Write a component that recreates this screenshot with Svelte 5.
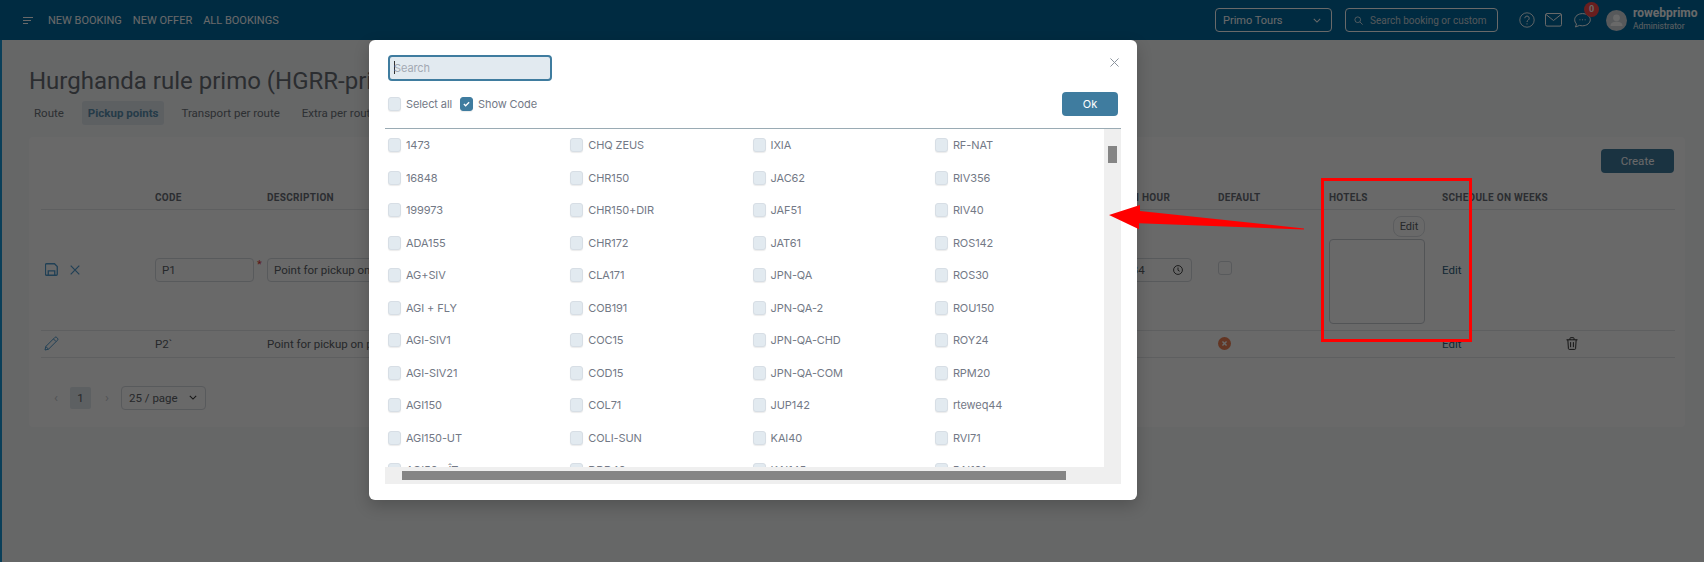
<script>
  const codes = [
    ["1473", "CHQ ZEUS", "IXIA", "RF-NAT"],
    ["16848", "CHR150", "JAC62", "RIV356"],
    ["199973", "CHR150+DIR", "JAF51", "RIV40"],
    ["ADA155", "CHR172", "JAT61", "ROS142"],
    ["AG+SIV", "CLA171", "JPN-QA", "ROS30"],
    ["AGI + FLY", "COB191", "JPN-QA-2", "ROU150"],
    ["AGI-SIV1", "COC15", "JPN-QA-CHD", "ROY24"],
    ["AGI-SIV21", "COD15", "JPN-QA-COM", "RPM20"],
    ["AGI150", "COL71", "JUP142", "rteweq44"],
    ["AGI150-UT", "COLI-SUN", "KAI40", "RVI71"],
    ["AGI50 - ÎT", "DDD40", "KAI145", "RAI101"]
  ];
</script>

<div class="page">
  <div class="side"></div>
  <header class="top">
    <svg class="burger" viewBox="0 0 10 7" width="10" height="7"><path d="M0 .5h10M0 3.5h8M0 6.5h5" stroke="#fff" fill="none"/></svg>
    <nav class="links">
      <span>NEW BOOKING</span>
      <span>NEW OFFER</span>
      <span>ALL BOOKINGS</span>
    </nav>
    <div class="grow"></div>
    <div class="company">
      <span>Primo Tours</span>
      <svg viewBox="0 0 10 6" width="8" height="5"><path d="M1 1l4 4 4-4" stroke="#fff" stroke-width="1.3" fill="none"/></svg>
    </div>
    <div class="find">
      <svg viewBox="0 0 12 12" width="9" height="9"><circle cx="5" cy="5" r="3.8" stroke="#fff" fill="none"/><path d="M8 8l3.5 3.5" stroke="#fff"/></svg>
      <span>Search booking or custom</span>
    </div>
    <svg class="help" viewBox="0 0 16 16" width="16" height="16"><circle cx="8" cy="8" r="7.2" stroke="#fff" fill="none" stroke-width=".9"/><path d="M5.8 6.2a2.2 2.2 0 1 1 3.4 1.9c-.8.5-1.2 1-1.2 1.9M8 11.4v1" stroke="#fff" fill="none"/></svg>
    <svg class="mail" viewBox="0 0 17 14" width="17" height="14"><rect x=".5" y=".5" width="16" height="12.6" rx="1.5" stroke="#fff" fill="none"/><path d="M1 1.5l7.5 6 7.5-6" stroke="#fff" fill="none"/></svg>
    <div class="chat">
      <svg viewBox="0 0 17 15" width="17" height="15"><path d="M8.5.6c4.300 0 7.800 2.700 7.800 6.100s-3.500 6.100-7.800 6.100c-1 0-2-.15-2.900-.4L1.500 14l1-3C1.300 9.900.7 8.400.7 6.700.7 3.300 4.200.6 8.500.6z" stroke="#fff" fill="none"/><path d="M5.500 6.800h.9M8.100 6.800h.9M10.700 6.800h.9" stroke="#fff"/></svg>
      <span class="badge">0</span>
    </div>
    <div class="avatar">
      <svg viewBox="0 0 21 21" width="21" height="21"><circle cx="10.500" cy="7.800" r="3.400" fill="#fff"/><path d="M4.500 16c0-3 2.500-4.300 6-4.300s6 1.300 6 4.300z" fill="#fff"/></svg>
    </div>
    <div class="who">
      <strong>rowebprimo</strong>
      <small>Administrator</small>
    </div>
  </header>

  <main class="content">
    <h1>Hurghanda rule primo (HGRR-primo)</h1>
    <div class="tabs">
      <span>Route</span>
      <span class="active">Pickup points</span>
      <span>Transport per route</span>
      <span class="extra">Extra per route</span>
    </div>

    <section class="card">
      <div class="actions"><button class="create">Create</button></div>
      <table>
        <colgroup>
          <col style="width:114px" /><col style="width:112px" /><col style="width:832px" /><col style="width:119px" /><col style="width:111px" /><col style="width:113px" /><col style="width:124px" /><col />
        </colgroup>
        <thead>
          <tr>
            <th></th><th>CODE</th><th>DESCRIPTION</th><th>RETURN HOUR</th><th>DEFAULT</th><th>HOTELS</th><th>SCHEDULE ON WEEKS</th><th></th>
          </tr>
        </thead>
        <tbody>
          <tr class="editing">
            <td>
              <div class="icons">
                <svg viewBox="0 0 14 14" width="13" height="13"><path d="M1.500.8h8.700l3 3v8.400a1 1 0 0 1-1 1h-10.700a1 1 0 0 1-1-1v-10.400a1 1 0 0 1 1-1z" stroke="#4f9bcf" stroke-width="1.400" fill="none"/><path d="M3.500 13v-4.500h7v4.500" stroke="#4f9bcf" stroke-width="1.400" fill="none"/></svg>
                <svg viewBox="0 0 10 10" width="10" height="10"><path d="M.7.7l8.600 8.600M9.300.7l-8.600 8.600" stroke="#4f9bcf" stroke-width="1.200"/></svg>
              </div>
            </td>
            <td>
              <div class="codecell"><div class="field code">P1</div><span class="req">*</span></div>
            </td>
            <td><div class="field desc">Point for pickup on primo</div></td>
            <td>
              <div class="field time">
                <span>12:34</span>
                <svg viewBox="0 0 12 12" width="10" height="10"><circle cx="6" cy="6" r="5.300" stroke="#222" fill="none"/><path d="M6 3v3.300l2 1.200" stroke="#222" fill="none"/></svg>
              </div>
            </td>
            <td><span class="tick"></span></td>
            <td>
              <div class="hotels">
                <button class="mini">Edit</button>
                <div class="hotelbox"></div>
              </div>
            </td>
            <td><span class="linkish">Edit</span></td>
            <td></td>
          </tr>
          <tr>
            <td>
              <svg class="pencil" viewBox="0 0 15 15" width="15" height="15"><path d="M1 14l.8-3.500L10.800 1.500a1.400 1.400 0 0 1 2 0l.7.700a1.400 1.400 0 0 1 0 2L4.500 13.200zM9.500 3l2.500 2.500M1.800 10.500l2.700 2.700" stroke="#4f9bcf" fill="none"/></svg>
            </td>
            <td>P2`</td>
            <td>Point for pickup on primo</td>
            <td>12:00</td>
            <td>
              <svg viewBox="0 0 14 14" width="13" height="13"><circle cx="7" cy="7" r="7" fill="#f08256"/><path d="M4.800 4.800l4.400 4.400M9.200 4.800l-4.400 4.400" stroke="#fff" stroke-width="1.500"/></svg>
            </td>
            <td></td>
            <td><span class="linkish">Edit</span></td>
            <td>
              <svg class="trash" viewBox="0 0 13 14" width="12" height="13"><path d="M.5 3h12M4.300 3v-1.500a.8.8 0 0 1 .8-.8h2.800a.8.8 0 0 1 .8.800v1.500M2 3l.6 9.500a1 1 0 0 0 1 .9h5.800a1 1 0 0 0 1-.9l.6-9.500M5 5.500v5.500M8 5.500v5.500" stroke="#222" fill="none"/></svg>
            </td>
          </tr>
        </tbody>
      </table>
      <div class="pager">
        <span class="arrow">‹</span>
        <span class="current">1</span>
        <span class="arrow">›</span>
        <div class="size">
          <span>25 / page</span>
          <svg viewBox="0 0 10 6" width="8" height="5"><path d="M1 1l4 4 4-4" stroke="#333" stroke-width="1.300" fill="none"/></svg>
        </div>
      </div>
    </section>
  </main>

  <div class="overlay"></div>

  <div class="modal">
    <button class="close" aria-label="Close">
      <svg viewBox="0 0 10 10" width="9" height="9"><path d="M.5.500l9 9M9.500.500l-9 9" stroke="#8a929c" stroke-width="1.100"/></svg>
    </button>
    <div class="searchbox"><i class="caret"></i>Search</div>
    <div class="tools">
      <label class="opt"><span class="box"></span>Select all</label>
      <label class="opt"><span class="box on"><svg viewBox="0 0 8 6" width="7" height="6"><path d="M1 3l2 2 4-4" stroke="#fff" stroke-width="1.500" fill="none"/></svg></span>Show Code</label>
      <div class="grow"></div>
      <button class="ok">Ok</button>
    </div>
    <div class="picker">
      <div class="list">
        {#each codes as row}
          {#each row as code}
            <label class="opt item"><span class="box"></span>{code}</label>
          {/each}
        {/each}
      </div>
      <div class="vtrack"><div class="vthumb"></div></div>
      <div class="htrack"><div class="hthumb"></div></div>
    </div>
  </div>

  <div class="redbox"></div>
  <svg class="pointer" viewBox="0 0 195 25" width="195" height="25"><polygon points="0,10 31,0 31,6 195,23.500 195,24.500 30,18.300 30,24.300" fill="#f00"/></svg>
</div>

<style>
  :global(body) {
    margin: 0;
    overflow: hidden;
  }

  .page {
    position: relative;
    width: 1704px;
    height: 562px;
    overflow: hidden;
    background: #f7f9fb;
    font-family: Roboto, "Noto Sans", sans-serif;
    font-size: 11.500px;
    color: #5c6268;
  }

  .side {
    position: absolute;
    left: 0;
    top: 40px;
    bottom: 0;
    width: 2px;
    background: #1a9ad8;
  }

  .grow {
    flex: 1;
  }

  .top {
    display: flex;
    align-items: center;
    height: 40px;
    padding-left: 23px;
    background: #00699f;
    color: #fff;
  }

  .burger {
    margin-right: 15px;
  }

  .links {
    display: flex;
    gap: 11px;
    font-size: 11px;
  }

  .company {
    display: flex;
    align-items: center;
    justify-content: space-between;
    box-sizing: border-box;
    width: 117px;
    height: 24px;
    padding: 0 10px 0 7px;
    border: 1px solid #fff;
    border-radius: 4px;
    font-size: 11px;
  }

  .find {
    display: flex;
    align-items: center;
    gap: 7px;
    box-sizing: border-box;
    width: 153px;
    height: 24px;
    margin-left: 13px;
    padding-left: 8px;
    border: 1px solid #fff;
    border-radius: 4px;
    font-size: 10px;
    color: #c9d3da;
  }

  .help {
    margin-left: 21px;
  }

  .mail {
    margin-left: 10px;
  }

  .chat {
    position: relative;
    width: 17px;
    height: 15px;
    margin-left: 12px;
  }

  .badge {
    position: absolute;
    left: 10px;
    top: -11px;
    width: 15px;
    height: 15px;
    border-radius: 50%;
    background: #ff4a4a;
    font-size: 9px;
    font-weight: 700;
    line-height: 15px;
    text-align: center;
  }

  .avatar {
    box-sizing: border-box;
    width: 21px;
    height: 21px;
    margin-left: 15px;
    border-radius: 50%;
    background: #d3d8de;
  }

  .who {
    display: flex;
    flex-direction: column;
    width: 71px;
    margin-left: 6px;
    line-height: 13px;
  }

  .who strong {
    font-size: 12px;
  }

  .who small {
    font-size: 8.500px;
    color: #e3e8ec;
  }

  .content {
    padding: 27px 19px 0 29px;
  }

  h1 {
    margin: 0;
    font-size: 24px;
    font-weight: 400;
    line-height: 28px;
    color: #696e74;
    white-space: nowrap;
  }

  .tabs {
    display: flex;
    align-items: center;
    gap: 17px;
    height: 24px;
    margin-top: 6px;
    padding-left: 5px;
    font-size: 11.500px;
    color: #6e747a;
  }

  .tabs .active {
    margin-left: 1px;
    padding: 0 6px;
    border-radius: 3px;
    background: #e2e9ef;
    color: #5a8fb0;
    font-weight: 700;
    line-height: 24px;
  }

  .tabs .extra {
    margin-left: 5px;
  }

  .card {
    box-sizing: border-box;
    height: 290px;
    margin-top: 12px;
    padding: 12px 11px 0 12px;
    border-radius: 4px;
    background: #fff;
  }

  .actions {
    display: flex;
    justify-content: flex-end;
    height: 24px;
    margin-bottom: 11px;
  }

  .create {
    width: 73px;
    height: 24px;
    border: 0;
    border-radius: 4px;
    background: #3f7c9f;
    color: #fff;
    font: inherit;
  }

  table {
    width: 1634px;
    border-collapse: collapse;
    table-layout: fixed;
  }

  th {
    height: 25px;
    padding: 2px 0 0;
    box-sizing: border-box;
    border-bottom: 1px solid #e5e7ea;
    font-size: 10px;
    font-weight: 700;
    letter-spacing: 0.3px;
    text-align: left;
    color: #6a6f78;
    white-space: nowrap;
  }

  td {
    height: 26px;
    padding: 0;
    border-bottom: 1px solid #e5e7ea;
    vertical-align: middle;
    white-space: nowrap;
  }

  td svg {
    display: block;
  }

  .editing td {
    height: 120px;
  }

  .icons {
    display: flex;
    align-items: center;
    gap: 12px;
    padding-left: 4px;
  }

  .pencil {
    margin-left: 3px;
  }

  .codecell {
    display: flex;
  }

  .field {
    box-sizing: border-box;
    height: 24px;
    padding: 0 6px;
    border: 1px solid #d6dadf;
    border-radius: 4px;
    line-height: 22px;
    background: #fff;
  }

  .code {
    width: 99px;
  }

  .req {
    margin-left: 3px;
    color: #e0393a;
    font-size: 11px;
    line-height: 14px;
  }

  .desc {
    width: 300px;
  }

  .time {
    display: flex;
    align-items: center;
    justify-content: space-between;
    width: 93px;
    padding: 0 8px 0 16px;
  }

  .tick {
    display: block;
    box-sizing: border-box;
    width: 14px;
    height: 14px;
    margin-top: -4px;
    border: 1px solid #d6dadf;
    border-radius: 3px;
  }

  .hotels {
    display: flex;
    flex-direction: column;
    align-items: flex-end;
    width: 96px;
    gap: 2px;
  }

  .mini {
    width: 32px;
    height: 21px;
    padding: 0;
    border: 1px solid #dde0e4;
    border-radius: 8px;
    background: #fff;
    color: #5c6268;
    font: inherit;
    font-size: 11px;
  }

  .hotelbox {
    box-sizing: border-box;
    width: 96px;
    height: 85px;
    border: 1px solid #c8ccd2;
    border-radius: 4px;
  }

  .linkish {
    font-size: 11.500px;
    color: #2f5f80;
  }

  .pager {
    display: flex;
    align-items: center;
    height: 24px;
    margin-top: 28px;
    padding-left: 13px;
    color: #c5c9ce;
  }

  .arrow {
    width: 16px;
    font-size: 13px;
  }

  .current {
    width: 21px;
    height: 22px;
    margin-right: 14px;
    border-radius: 2px;
    background: #e2e9ef;
    color: #5c6268;
    line-height: 22px;
    text-align: center;
  }

  .size {
    display: flex;
    align-items: center;
    justify-content: space-between;
    box-sizing: border-box;
    width: 85px;
    height: 24px;
    padding: 0 8px 0 7px;
    border: 1px solid #d6dadf;
    border-radius: 4px;
    color: #5c6268;
  }

  .overlay {
    position: absolute;
    inset: 0;
    background: rgba(0, 0, 0, 0.59);
  }

  .modal {
    position: absolute;
    left: 369px;
    top: 40px;
    box-sizing: border-box;
    width: 768px;
    height: 460px;
    padding: 15px 16px 0 16px;
    border-radius: 6px;
    background: #fff;
    box-shadow: 0 6px 16px rgba(0, 0, 0, 0.2);
    font-family: Inter, "Noto Sans", sans-serif;
    font-size: 11px;
    letter-spacing: -0.1px;
    color: #737986;
  }

  .close {
    position: absolute;
    right: 18px;
    top: 15px;
    padding: 0;
    border: 0;
    background: none;
  }

  .searchbox {
    box-sizing: border-box;
    width: 164px;
    height: 26px;
    margin-left: 3px;
    padding-left: 4px;
    border: 2px solid #3f7c9f;
    border-radius: 4px;
    background: #e2eaf0;
    color: #a2a9b3;
    line-height: 22px;
  }

  .caret {
    display: inline-block;
    width: 1px;
    height: 13px;
    margin-right: -1px;
    background: #333;
    vertical-align: -2px;
  }

  .tools {
    display: flex;
    align-items: center;
    gap: 8px;
    height: 24px;
    margin-top: 11px;
    padding: 0 3px;
  }

  .ok {
    width: 56px;
    height: 24px;
    border: 0;
    border-radius: 4px;
    background: #3f7c9f;
    color: #fff;
    font: inherit;
  }

  .opt {
    display: flex;
    align-items: center;
    gap: 5px;
    white-space: nowrap;
  }

  .box {
    display: flex;
    align-items: center;
    justify-content: center;
    box-sizing: border-box;
    width: 13px;
    height: 14px;
    border: 1px solid #d7dee5;
    border-radius: 3px;
    background: #e2eaf0;
    box-shadow: 0 1px 1px rgba(0, 0, 0, 0.08);
  }

  .box.on {
    border-color: #3f7c9f;
    background: #3f7c9f;
  }

  .picker {
    display: grid;
    grid-template-columns: 719px 17px;
    grid-template-rows: 338px 17px;
    width: 736px;
    margin-top: 12px;
    border-top: 1px solid #9aabb4;
  }

  .list {
    display: grid;
    grid-template-columns: repeat(4, 182.300px);
    grid-auto-rows: 32.550px;
    align-items: start;
    overflow: hidden;
    padding: 9px 0 0 3px;
    box-sizing: border-box;
  }

  .item {
    height: 14px;
  }

  .vtrack {
    padding: 17px 4px 0;
    background: #efefef;
  }

  .vthumb {
    height: 17px;
    background: #858585;
  }

  .htrack {
    grid-column: 1 / 3;
    padding: 4px 0 0 17px;
    background: #efefef;
  }

  .hthumb {
    width: 664px;
    height: 9px;
    background: #858585;
  }

  .redbox {
    position: absolute;
    left: 1321px;
    top: 178px;
    box-sizing: border-box;
    width: 151px;
    height: 164px;
    border: 3px solid #f00;
  }

  .pointer {
    position: absolute;
    left: 1109px;
    top: 205px;
  }
</style>
